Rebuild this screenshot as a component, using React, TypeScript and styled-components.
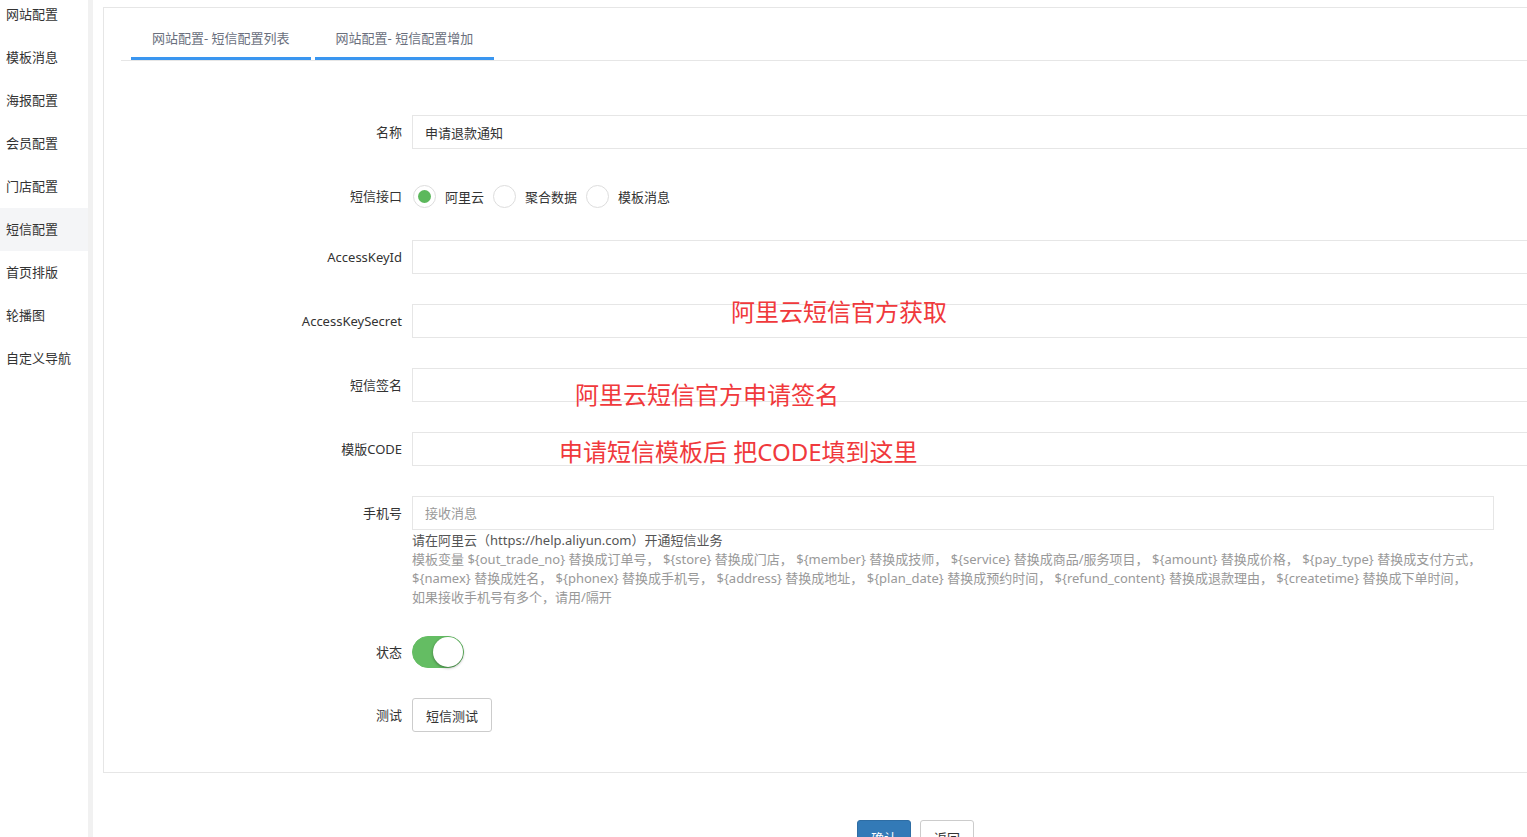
import React, { useState } from "react";
import styled, { createGlobalStyle } from "styled-components";

const GlobalStyle = createGlobalStyle`
  html, body {
    margin: 0;
    padding: 0;
    background: #fff;
    overflow-x: hidden;
  }
  body {
    font-family: "Noto Sans", "Noto Sans CJK SC", sans-serif;
    font-size: 13px;
    color: #333;
  }
  * {
    box-sizing: border-box;
  }
`;

const Layout = styled.div`
  display: flex;
  min-height: 900px;
`;

const Sidebar = styled.ul`
  width: 93px;
  flex: none;
  margin: 0;
  padding: 0;
  list-style: none;
  border-right: 5px solid #f1f1f1;
  overflow: hidden;
`;

const MenuList = styled.div`
  margin-top: -7px;
`;

const MenuItem = styled.li<{ $active?: boolean }>`
  height: 43px;
  line-height: 43px;
  padding-left: 6px;
  font-size: 13px;
  color: #333;
  white-space: nowrap;
  background: ${(p) => (p.$active ? "#f4f5f7" : "transparent")};
`;

const Main = styled.div`
  flex: 1;
  min-width: 0;
  overflow: hidden;
`;

const Panel = styled.div`
  width: 1600px;
  margin: 7px 0 0 10px;
  padding: 12px 0 40px;
  border: 1px solid #e6e6e6;
`;

const TabNav = styled.div`
  display: flex;
  gap: 4px;
  margin-left: 17px;
  padding-left: 10px;
  border-bottom: 1px solid #e6e6e6;
`;

const Tab = styled.div`
  height: 40px;
  line-height: 37px;
  padding: 0 21px;
  font-size: 13px;
  color: #6a6f7d;
  border-bottom: 3px solid #3a96f0;
  white-space: nowrap;
`;

const Form = styled.div`
  margin-top: 54px;
`;

const Row = styled.div<{ $gap?: number }>`
  display: flex;
  align-items: flex-start;
  margin-bottom: ${(p) => (p.$gap ?? 30)}px;
`;

const Label = styled.label<{ $h?: number }>`
  width: 308px;
  flex: none;
  padding-right: 10px;
  text-align: right;
  line-height: ${(p) => p.$h ?? 34}px;
  font-size: 13px;
  color: #333;
  white-space: nowrap;
`;

const Field = styled.div<{ $w?: number }>`
  position: relative;
  width: ${(p) => p.$w ?? 1250}px;
`;

const Input = styled.input`
  display: block;
  width: 100%;
  height: 34px;
  padding: 0 12px;
  border: 1px solid #e6e6e6;
  border-radius: 0;
  outline: none;
  font-family: inherit;
  font-size: 13px;
  color: #333;
  background: #fff;
  &::placeholder {
    color: #999;
  }
`;

const Note = styled.span<{ $top: number; $left: number }>`
  position: absolute;
  top: ${(p) => p.$top}px;
  left: ${(p) => p.$left}px;
  font-size: 24px;
  line-height: 30px;
  color: #f0393c;
  white-space: nowrap;
  pointer-events: none;
`;

const RadioGroup = styled.div`
  display: flex;
  align-items: center;
  height: 36px;
`;

const RadioOption = styled.label`
  display: flex;
  align-items: center;
  margin-right: 8px;
  cursor: pointer;
`;

const RadioCircle = styled.span<{ $checked?: boolean }>`
  width: 23px;
  height: 23px;
  border: 1px solid #ddd;
  border-radius: 50%;
  display: flex;
  align-items: center;
  justify-content: center;
  margin: 0 9px 0 1px;
  &::after {
    content: "";
    width: 13px;
    height: 13px;
    border-radius: 50%;
    background: ${(p) => (p.$checked ? "#5cb85c" : "transparent")};
  }
`;

const Help = styled.div`
  padding-top: 1px;
  line-height: 19px;
  font-size: 13px;
  white-space: nowrap;
`;

const HelpLine = styled.div<{ $dark?: boolean }>`
  color: ${(p) => (p.$dark ? "#555" : "#999")};
`;

const Switch = styled.button<{ $on: boolean }>`
  position: relative;
  width: 52px;
  height: 32px;
  padding: 0;
  border-radius: 16px;
  border: 1px solid ${(p) => (p.$on ? "#64bd63" : "#dfdfdf")};
  background: ${(p) => (p.$on ? "#64bd63" : "#fff")};
  cursor: pointer;
  &::after {
    content: "";
    position: absolute;
    top: 0;
    left: ${(p) => (p.$on ? "20px" : "0")};
    width: 30px;
    height: 30px;
    border-radius: 50%;
    background: #fff;
    box-shadow: 0 1px 3px rgba(0, 0, 0, 0.4);
  }
`;

const Button = styled.button<{ $primary?: boolean }>`
  height: 34px;
  padding: 0 13px;
  font-family: inherit;
  font-size: 13px;
  border-radius: 3px;
  border: 1px solid ${(p) => (p.$primary ? "#2e6da4" : "#ccc")};
  background: ${(p) => (p.$primary ? "#337ab7" : "#fff")};
  color: ${(p) => (p.$primary ? "#fff" : "#333")};
  cursor: pointer;
`;

const Actions = styled.div`
  display: flex;
  gap: 9px;
  margin: 47px 0 0 764px;
`;

const menu = [
  "网站配置",
  "模板消息",
  "海报配置",
  "会员配置",
  "门店配置",
  "短信配置",
  "首页排版",
  "轮播图",
  "自定义导航",
];

const helpLines = [
  "模板变量 ${out_trade_no} 替换成订单号， ${store} 替换成门店， ${member} 替换成技师， ${service} 替换成商品/服务项目， ${amount} 替换成价格， ${pay_type} 替换成支付方式，",
  "${namex} 替换成姓名， ${phonex} 替换成手机号， ${address} 替换成地址， ${plan_date} 替换成预约时间， ${refund_content} 替换成退款理由， ${createtime} 替换成下单时间，",
  "如果接收手机号有多个，请用/隔开",
];

const providers = ["阿里云", "聚合数据", "模板消息"];

const App = () => {
  const [provider, setProvider] = useState(0);
  const [enabled, setEnabled] = useState(true);

  return (
    <>
      <GlobalStyle />
      <Layout>
        <Sidebar>
          <MenuList>
            {menu.map((m) => (
              <MenuItem key={m} $active={m === "短信配置"}>
                {m}
              </MenuItem>
            ))}
          </MenuList>
        </Sidebar>
        <Main>
          <Panel>
            <TabNav>
              <Tab>网站配置- 短信配置列表</Tab>
              <Tab>网站配置- 短信配置增加</Tab>
            </TabNav>
            <Form>
              <Row $gap={29}>
                <Label>名称</Label>
                <Field>
                  <Input defaultValue="申请退款通知" />
                </Field>
              </Row>
              <Row $gap={26}>
                <Label $h={36}>短信接口</Label>
                <RadioGroup>
                  {providers.map((p, i) => (
                    <RadioOption key={p} onClick={() => setProvider(i)}>
                      <RadioCircle $checked={provider === i} />
                      {p}
                    </RadioOption>
                  ))}
                </RadioGroup>
              </Row>
              <Row>
                <Label>AccessKeyId</Label>
                <Field>
                  <Input />
                </Field>
              </Row>
              <Row>
                <Label>AccessKeySecret</Label>
                <Field>
                  <Input />
                  <Note $top={-7} $left={319}>
                    阿里云短信官方获取
                  </Note>
                </Field>
              </Row>
              <Row>
                <Label>短信签名</Label>
                <Field>
                  <Input />
                  <Note $top={12} $left={163}>
                    阿里云短信官方申请签名
                  </Note>
                </Field>
              </Row>
              <Row>
                <Label>模版CODE</Label>
                <Field>
                  <Input />
                  <Note $top={5} $left={147}>
                    申请短信模板后 把CODE填到这里
                  </Note>
                </Field>
              </Row>
              <Row $gap={29}>
                <Label>手机号</Label>
                <Field $w={1082}>
                  <Input placeholder="接收消息" />
                  <Help>
                    <HelpLine $dark>请在阿里云（https://help.aliyun.com）开通短信业务</HelpLine>
                    {helpLines.map((l) => (
                      <HelpLine key={l}>{l}</HelpLine>
                    ))}
                  </Help>
                </Field>
              </Row>
              <Row $gap={30}>
                <Label $h={32}>状态</Label>
                <Switch $on={enabled} onClick={() => setEnabled(!enabled)} />
              </Row>
              <Row $gap={0}>
                <Label>测试</Label>
                <Button>短信测试</Button>
              </Row>
            </Form>
          </Panel>
          <Actions>
            <Button $primary>确认</Button>
            <Button>返回</Button>
          </Actions>
        </Main>
      </Layout>
    </>
  );
};

export default App;
